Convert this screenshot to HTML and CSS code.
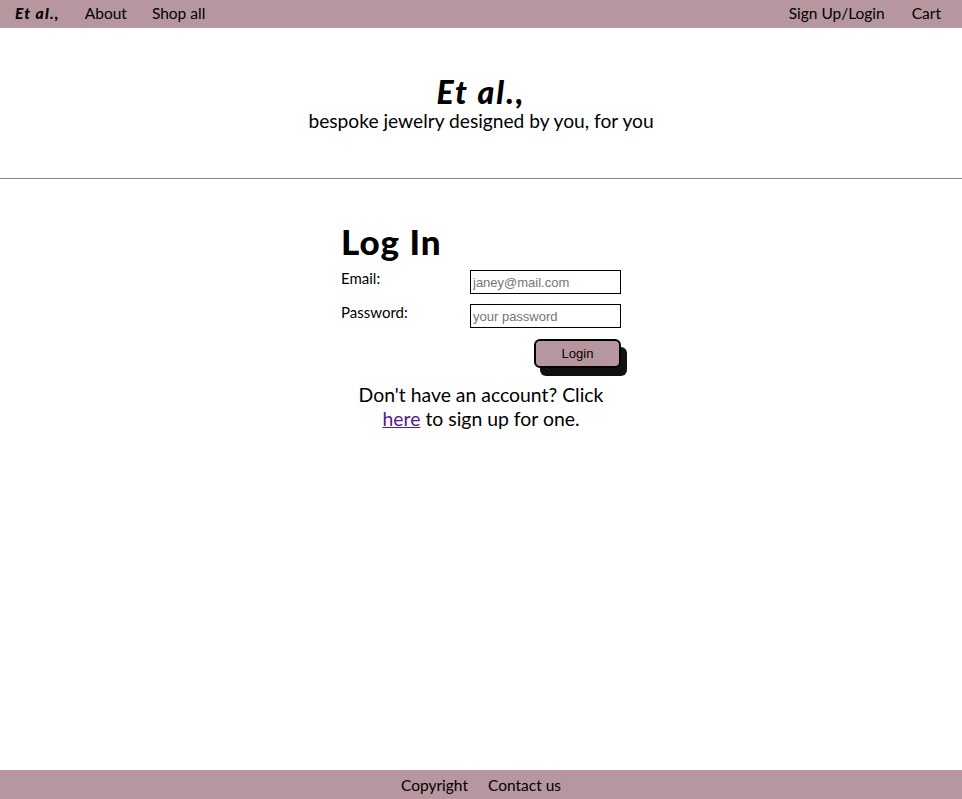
FILE: index.html
```html
<!DOCTYPE html>
<html>
<head>
<meta charset="utf-8">
<link rel="stylesheet" href="styles.css">
</head>
<body>
<nav class="topnav">
  <div class="nav-left">
    <a class="brand" href="#">Et al.,</a>
    <a href="#">About</a>
    <a href="#">Shop all</a>
  </div>
  <div class="nav-right">
    <a href="#">Sign Up/Login</a>
    <a href="#">Cart</a>
  </div>
</nav>
<header class="hero">
  <h1 class="hero-title">Et al.,</h1>
  <p class="hero-sub">bespoke jewelry designed by you, for you</p>
</header>
<hr class="divider">
<main class="login">
  <h2 class="login-title">Log In</h2>
  <form class="login-form">
    <label class="field-label" for="email">Email:</label>
    <input class="field-input" id="email" type="text" placeholder="janey@mail.com">
    <label class="field-label" for="pw">Password:</label>
    <input class="field-input" id="pw" type="password" placeholder="your password">
    <div class="btn-row"><button class="btn" type="button">Login</button></div>
  </form>
  <p class="signup-note">Don't have an account? Click <a href="#">here</a> to sign up for one.</p>
</main>
<footer class="footer">
  <a href="#">Copyright</a>
  <a href="#">Contact us</a>
</footer>
</body>
</html>
```

FILE: styles.css
```css
html, body {
  margin: 0;
  padding: 0;
  height: 100%;
}
body {
  font-family: "Lato", "Open Sans", sans-serif;
  color: #000;
  background: #fff;
  display: flex;
  flex-direction: column;
}
a {
  color: #000;
  text-decoration: none;
}
.topnav {
  height: 28px;
  box-sizing: border-box;
  padding-bottom: 3px;
  background: #b7979f;
  display: flex;
  justify-content: space-between;
  align-items: center;
  font-size: 15.5px;
}
.nav-left, .nav-right {
  display: flex;
  align-items: center;
  gap: 25px;
}
.nav-left { padding-left: 15px; }
.nav-right { padding-right: 21px; gap: 27px; }
.brand {
  font-weight: 900;
  font-style: italic;
  letter-spacing: 1.2px;
}
.hero {
  text-align: center;
  padding-top: 47px;
  box-sizing: border-box;
  height: 150px;
}
.hero-title {
  margin: 0;
  font-size: 32px;
  font-weight: 900;
  font-style: italic;
  letter-spacing: 2px;
  line-height: 34px;
}
.hero-sub {
  margin: 0;
  font-size: 19.2px;
  line-height: 24px;
}
.divider {
  margin: 0;
  border: 0;
  border-top: 1px solid #888;
}
.login {
  width: 280px;
  margin: 0 auto;
  padding-top: 42px;
  flex: 1;
}
.login-title {
  margin: 0 0 9px;
  font-size: 35px;
  font-weight: 900;
  letter-spacing: 1px;
  line-height: 40px;
}
.login-form {
  display: grid;
  grid-template-columns: 129px 151px;
  row-gap: 10px;
}
.field-label {
  font-size: 15px;
  line-height: 20px;
  margin-top: -2px;
}
.field-input {
  box-sizing: border-box;
  width: 151px;
  height: 24px;
  border: 1px solid #000;
  padding: 1px 2px;
  font-family: "Liberation Sans", Arial, sans-serif;
  font-size: 13px;
  outline: none;
}
.field-input::placeholder { color: #757575; }
.btn-row {
  grid-column: 1 / 3;
  display: flex;
  justify-content: flex-end;
  padding-top: 1px;
}
.btn {
  width: 87px;
  height: 29px;
  box-sizing: border-box;
  background: #b7979f;
  border: 2px solid #000;
  border-radius: 6px;
  box-shadow: 6px 8px 0 #111;
  font-family: "Liberation Sans", Arial, sans-serif;
  font-size: 13px;
  color: #000;
  padding: 0;
}
.signup-note {
  margin: 15px 0 0;
  text-align: center;
  font-size: 19.4px;
  line-height: 24px;
}
.signup-note a {
  color: #551a8b;
  text-decoration: underline;
}
.footer {
  height: 29px;
  background: #b7979f;
  display: flex;
  justify-content: center;
  align-items: center;
  gap: 20px;
  font-size: 15.5px;
}
```
